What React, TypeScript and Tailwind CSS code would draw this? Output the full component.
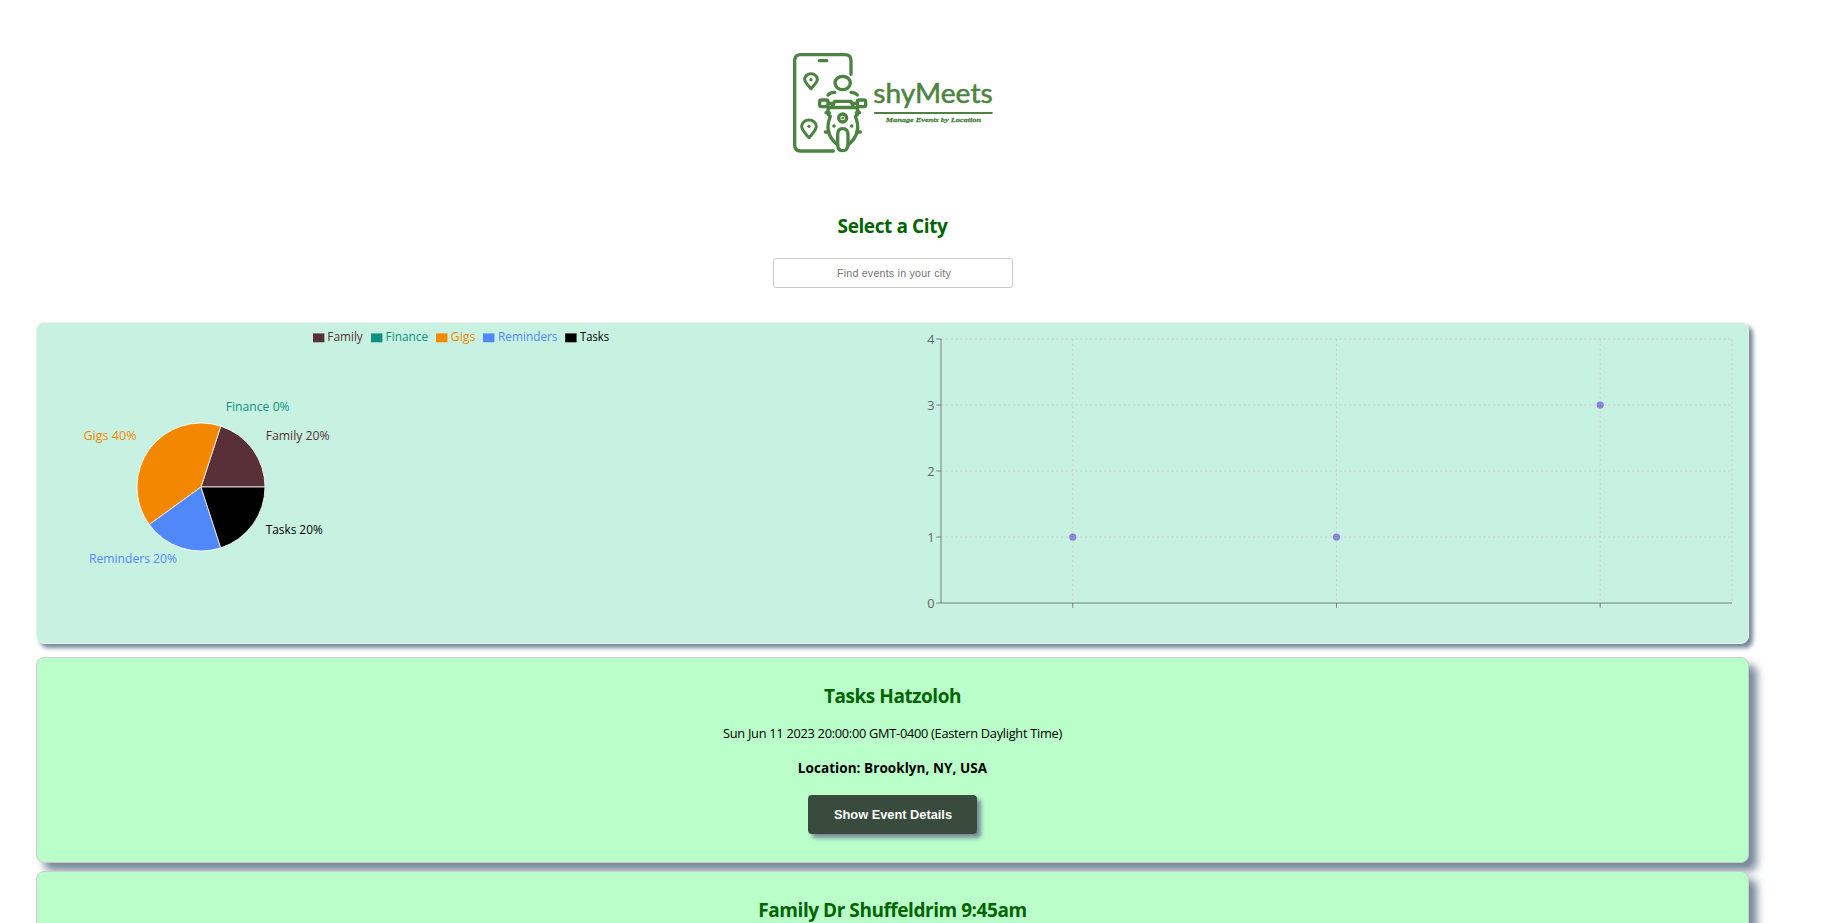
import React from "react";

const FONT = "font-['Open_Sans','Noto_Sans',sans-serif]";

function Logo() {
  return (
    <svg width="230" height="125" viewBox="0 0 690 375" fill="none" stroke="#4c8340" strokeWidth="10" strokeLinecap="round" strokeLinejoin="round" role="img">
      <path d="M160 333H62Q44 333 44 315V62Q44 44 62 44H195Q213 44 213 62V103" />
      <path d="M118 62H140" />
      <path d="M93 146C82 134 74 127 74 118A19 17 0 0 1 112 118C112 127 104 134 93 146Z" strokeWidth="9" />
      <circle cx="93" cy="119" r="5" fill="#4c8340" stroke="none" />
      <path d="M87 293C74 278 65 270 65 259A22 19 0 0 1 109 259C109 270 100 278 87 293Z" strokeWidth="9" />
      <circle cx="87" cy="259" r="5" fill="#4c8340" stroke="none" />
      <ellipse cx="188" cy="129" rx="23" ry="20" />
      <path d="M144 165Q152 156 164 157M213 157Q225 157 232 165" />
      <rect x="119" y="180" width="25" height="20" rx="5" />
      <rect x="232" y="180" width="25" height="20" rx="5" />
      <path d="M146 190H158M219 190H230M156 202L164 184H213L221 202Z" />
      <path d="M144 203H233" />
      <path d="M146 206Q137 220 151 229C137 262 145 292 173 315M231 206Q240 220 226 229C240 262 232 292 204 315" />
      <path d="M138 218H148M229 218H239M136 276H147M230 276H241" />
      <circle cx="188" cy="234" r="12" />
      <circle cx="188" cy="234" r="4" fill="#4c8340" stroke="none" />
      <circle cx="162" cy="258" r="5.500" fill="#4c8340" stroke="none" />
      <circle cx="215" cy="258" r="5.500" fill="#4c8340" stroke="none" />
      <path d="M173 284Q173 266 188 266Q204 266 204 284V316Q202 332 188 332Q174 332 173 316Z" />
      <path d="M285 219H635" strokeWidth="6.500" />
      <g fill="#4c8340">
        <text x="280" y="188" className="font-['Lato',sans-serif]" fontSize="78" textLength="358" lengthAdjust="spacingAndGlyphs" strokeWidth="1.5">shyMeets</text>
        <text x="317" y="245" className="font-['Liberation_Serif',serif]" fontSize="20" fontWeight="bold" fontStyle="italic" textLength="286" lengthAdjust="spacingAndGlyphs" strokeWidth="0.8">Manage Events by Location</text>
      </g>
    </svg>
  );
}

const COLORS = { Family: "#5a3038", Finance: "#108f80", Gigs: "#f48700", Reminders: "#5088fa", Tasks: "#000000" };

const LEGEND = [
  { name: "Family", box: 276, x: 290.3, w: 35.5, color: COLORS.Family },
  { name: "Finance", box: 334, x: 348.6, w: 42.5, color: COLORS.Finance },
  { name: "Gigs", box: 399, x: 413.6, w: 25, color: COLORS.Gigs },
  { name: "Reminders", box: 446, x: 461, w: 59.5, color: COLORS.Reminders },
  { name: "Tasks", box: 528.2, x: 543, w: 29, color: COLORS.Tasks },
];

const LABELS = [
  { text: "Finance 0%", x: 188.7, y: 88, w: 64, color: COLORS.Finance },
  { text: "Family 20%", x: 228.7, y: 117, w: 64, color: COLORS.Family },
  { text: "Gigs 40%", x: 46.5, y: 117, w: 53, color: COLORS.Gigs },
  { text: "Tasks 20%", x: 228.7, y: 211, w: 57, color: COLORS.Tasks },
  { text: "Reminders 20%", x: 52, y: 240, w: 88, color: COLORS.Reminders },
];

const CX = 164;
const CY = 164;
const R = 64;

function slice(from: number, to: number) {
  const p = (a: number) => `${CX + R * Math.cos((a * Math.PI) / 180)} ${CY - R * Math.sin((a * Math.PI) / 180)}`;
  return `M${CX} ${CY}L${p(from)}A${R} ${R} 0 0 0 ${p(to)}Z`;
}

function PieChart() {
  return (
    <svg width="856" height="320" className={`shrink-0 ${FONT}`} fontSize="12.8">
      <g stroke="#ffffff" strokeWidth="0.8">
        <path d={slice(0, 72)} fill={COLORS.Family} />
        <path d={slice(72, 216)} fill={COLORS.Gigs} />
        <path d={slice(216, 288)} fill={COLORS.Reminders} />
        <path d={slice(288, 360)} fill={COLORS.Tasks} />
      </g>
      {LABELS.map((l) => (
        <text key={l.text} x={l.x} y={l.y} fill={l.color} textLength={l.w} lengthAdjust="spacingAndGlyphs">{l.text}</text>
      ))}
      {LEGEND.map((l) => (
        <g key={l.name} fill={l.color}>
          <rect x={l.box} y="10.4" width="11.400" height="8.900" />
          <text x={l.x} y="18" textLength={l.w} lengthAdjust="spacingAndGlyphs">{l.name}</text>
        </g>
      ))}
    </svg>
  );
}

const POINTS = [
  { x: 179.8, v: 1 },
  { x: 443.5, v: 1 },
  { x: 707.2, v: 3 },
];

function ScatterChart() {
  return (
    <svg width="855" height="320" className={`shrink-0 ${FONT}`} fontSize="12.8">
      <g stroke="#cccccc" strokeWidth="0.8" strokeDasharray="2.4 2.4">
        {[1, 2, 3, 4].map((v) => (
          <path key={v} d={`M48 ${280 - v * 66}H839`} />
        ))}
        {POINTS.map((p) => (
          <path key={p.x} d={`M${p.x} 16V280`} />
        ))}
        <path d="M839 16V280" />
      </g>
      <g stroke="#666666" strokeWidth="0.8">
        <path d="M48 16V280M48 280H839" />
        {[0, 1, 2, 3, 4].map((v) => (
          <path key={v} d={`M43.2 ${280 - v * 66}H48`} />
        ))}
        {POINTS.map((p) => (
          <path key={p.x} d={`M${p.x} 280V284.8`} />
        ))}
      </g>
      {[0, 1, 2, 3, 4].map((v) => (
        <text key={v} x="41.600" y={284.6 - v * 66} textAnchor="end" fill="#666666">{v}</text>
      ))}
      {POINTS.map((p) => (
        <circle key={p.x} cx={p.x} cy={280 - p.v * 66} r="3.610" fill="#8884d8" />
      ))}
    </svg>
  );
}

type EventCardProps = { title: string; date?: string; location?: string };

function EventCard({ title, date, location }: EventCardProps) {
  return (
    <section className="flex h-[206px] shrink-0 flex-col items-center rounded-lg border border-[#cccccc] bg-[#baffc9] pt-[26px] text-black shadow-[8px_8px_8px_#778899]">
      <h2 className="text-[19px] leading-[25px] font-bold tracking-[-0.45px] text-[#006400]">{title}</h2>
      {date && <p className="mt-[15px] text-[12.8px] leading-[18px] tracking-[-0.28px]">{date}</p>}
      {location && <p className="mt-[17px] text-[13.5px] leading-[18px] font-bold tracking-[0.06px]">{location}</p>}
      {date && (
        <button className="mt-[18px] h-[39px] w-[169px] rounded bg-[#384b3c] pl-[1px] font-['Liberation_Sans',sans-serif] text-[12.8px] font-bold text-white shadow-[4px_4px_4px_#778899]">
          Show Event Details
        </button>
      )}
    </section>
  );
}

export default function App() {
  return (
    <div className={`flex h-[923px] flex-col overflow-hidden bg-white pr-[74px] pl-[36px] ${FONT}`}>
      <header className="flex shrink-0 flex-col items-center pt-[40px]">
        <div className="flex w-full justify-center pl-[5px]">
          <Logo />
        </div>
        <h2 className="mt-[49px] text-[19px] leading-[25px] font-bold tracking-[-0.4px] text-[#006400]">Select a City</h2>
        <input
          placeholder="Find events in your city"
          className="mt-[19px] h-[30px] w-[240px] rounded-[3px] border border-[#cccccc] bg-white pl-[3px] text-center font-['Liberation_Sans',sans-serif] text-[10.7px] tracking-[0.2px] text-black placeholder:text-[#757575]"
        />
      </header>
      <section className="mt-[34px] flex h-[322px] shrink-0 rounded-lg border border-[#eeeeee] bg-[#c7f2e1] shadow-[4px_4px_4px_#778899]">
        <PieChart />
        <ScatterChart />
      </section>
      <main className="mt-[13px] flex flex-col gap-2">
        <EventCard title="Tasks Hatzoloh" date="Sun Jun 11 2023 20:00:00 GMT-0400 (Eastern Daylight Time)" location="Location: Brooklyn, NY, USA" />
        <EventCard title="Family Dr Shuffeldrim 9:45am" />
      </main>
    </div>
  );
}
